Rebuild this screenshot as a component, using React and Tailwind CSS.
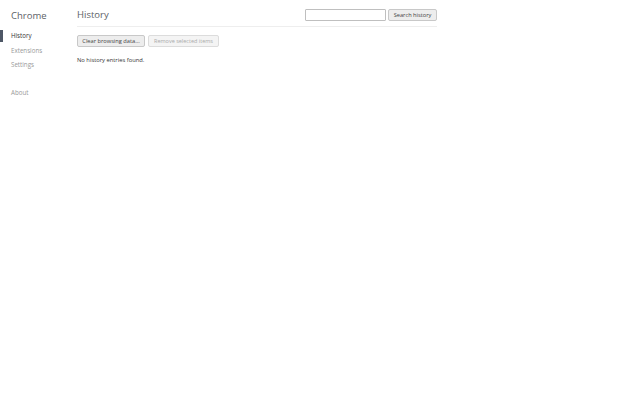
import React from 'react';

function App() {
  const font = { fontFamily: '"Open Sans", "Noto Sans", sans-serif' };
  return (
    <div className="w-[640px] h-[400px] bg-white flex text-[#333]" style={font}>
      {/* Sidebar */}
      <div className="w-[77px] shrink-0 flex flex-col">
        <div className="pl-[11px] pt-[9px] h-[30px] text-[9.5px] text-[#5c6166]">Chrome</div>
        <div className="flex items-center h-[12px]">
          <div className="w-[3px] h-[12px] bg-[#4e5766]"></div>
          <div className="pl-[8px] text-[6.2px] text-[#333]">History</div>
        </div>
        <div className="pl-[11px] mt-[2px] h-[14px] flex items-center text-[6.2px] text-[#999]">Extensions</div>
        <div className="pl-[11px] h-[14px] flex items-center text-[6.2px] text-[#999]">Settings</div>
        <div className="pl-[11px] mt-[14px] h-[14px] flex items-center text-[6.2px] text-[#999]">About</div>
      </div>

      {/* Main */}
      <div className="flex flex-col w-[360px]">
        <div className="flex items-center justify-between h-[27px] pt-[4px] border-b border-[#eee]">
          <div className="text-[9.5px] text-[#5c6166]">History</div>
          <div className="flex items-center gap-[2px]">
            <div className="w-[81px] h-[12px] border border-[#bfbfbf] bg-white rounded-[1px]"></div>
            <div className="h-[12px] w-[49px] justify-center flex items-center border border-[#c8c8c8] rounded-[2px] bg-[#ededed] text-[5.7px] text-[#444]">Search history</div>
          </div>
        </div>
        <div className="flex gap-[3px] mt-[8px]">
          <div className="h-[12px] w-[68px] justify-center flex items-center border border-[#c8c8c8] rounded-[2px] bg-[#ededed] text-[5.7px] text-[#444]">Clear browsing data...</div>
          <div className="h-[12px] w-[71px] justify-center flex items-center border border-[#dcdcdc] rounded-[2px] bg-[#f4f4f4] text-[5.5px] text-[#aaa] whitespace-nowrap">Remove selected items</div>
        </div>
        <div className="mt-[9px] text-[5.8px] text-[#333]">No history entries found.</div>
      </div>
    </div>
  );
}

export default App;
